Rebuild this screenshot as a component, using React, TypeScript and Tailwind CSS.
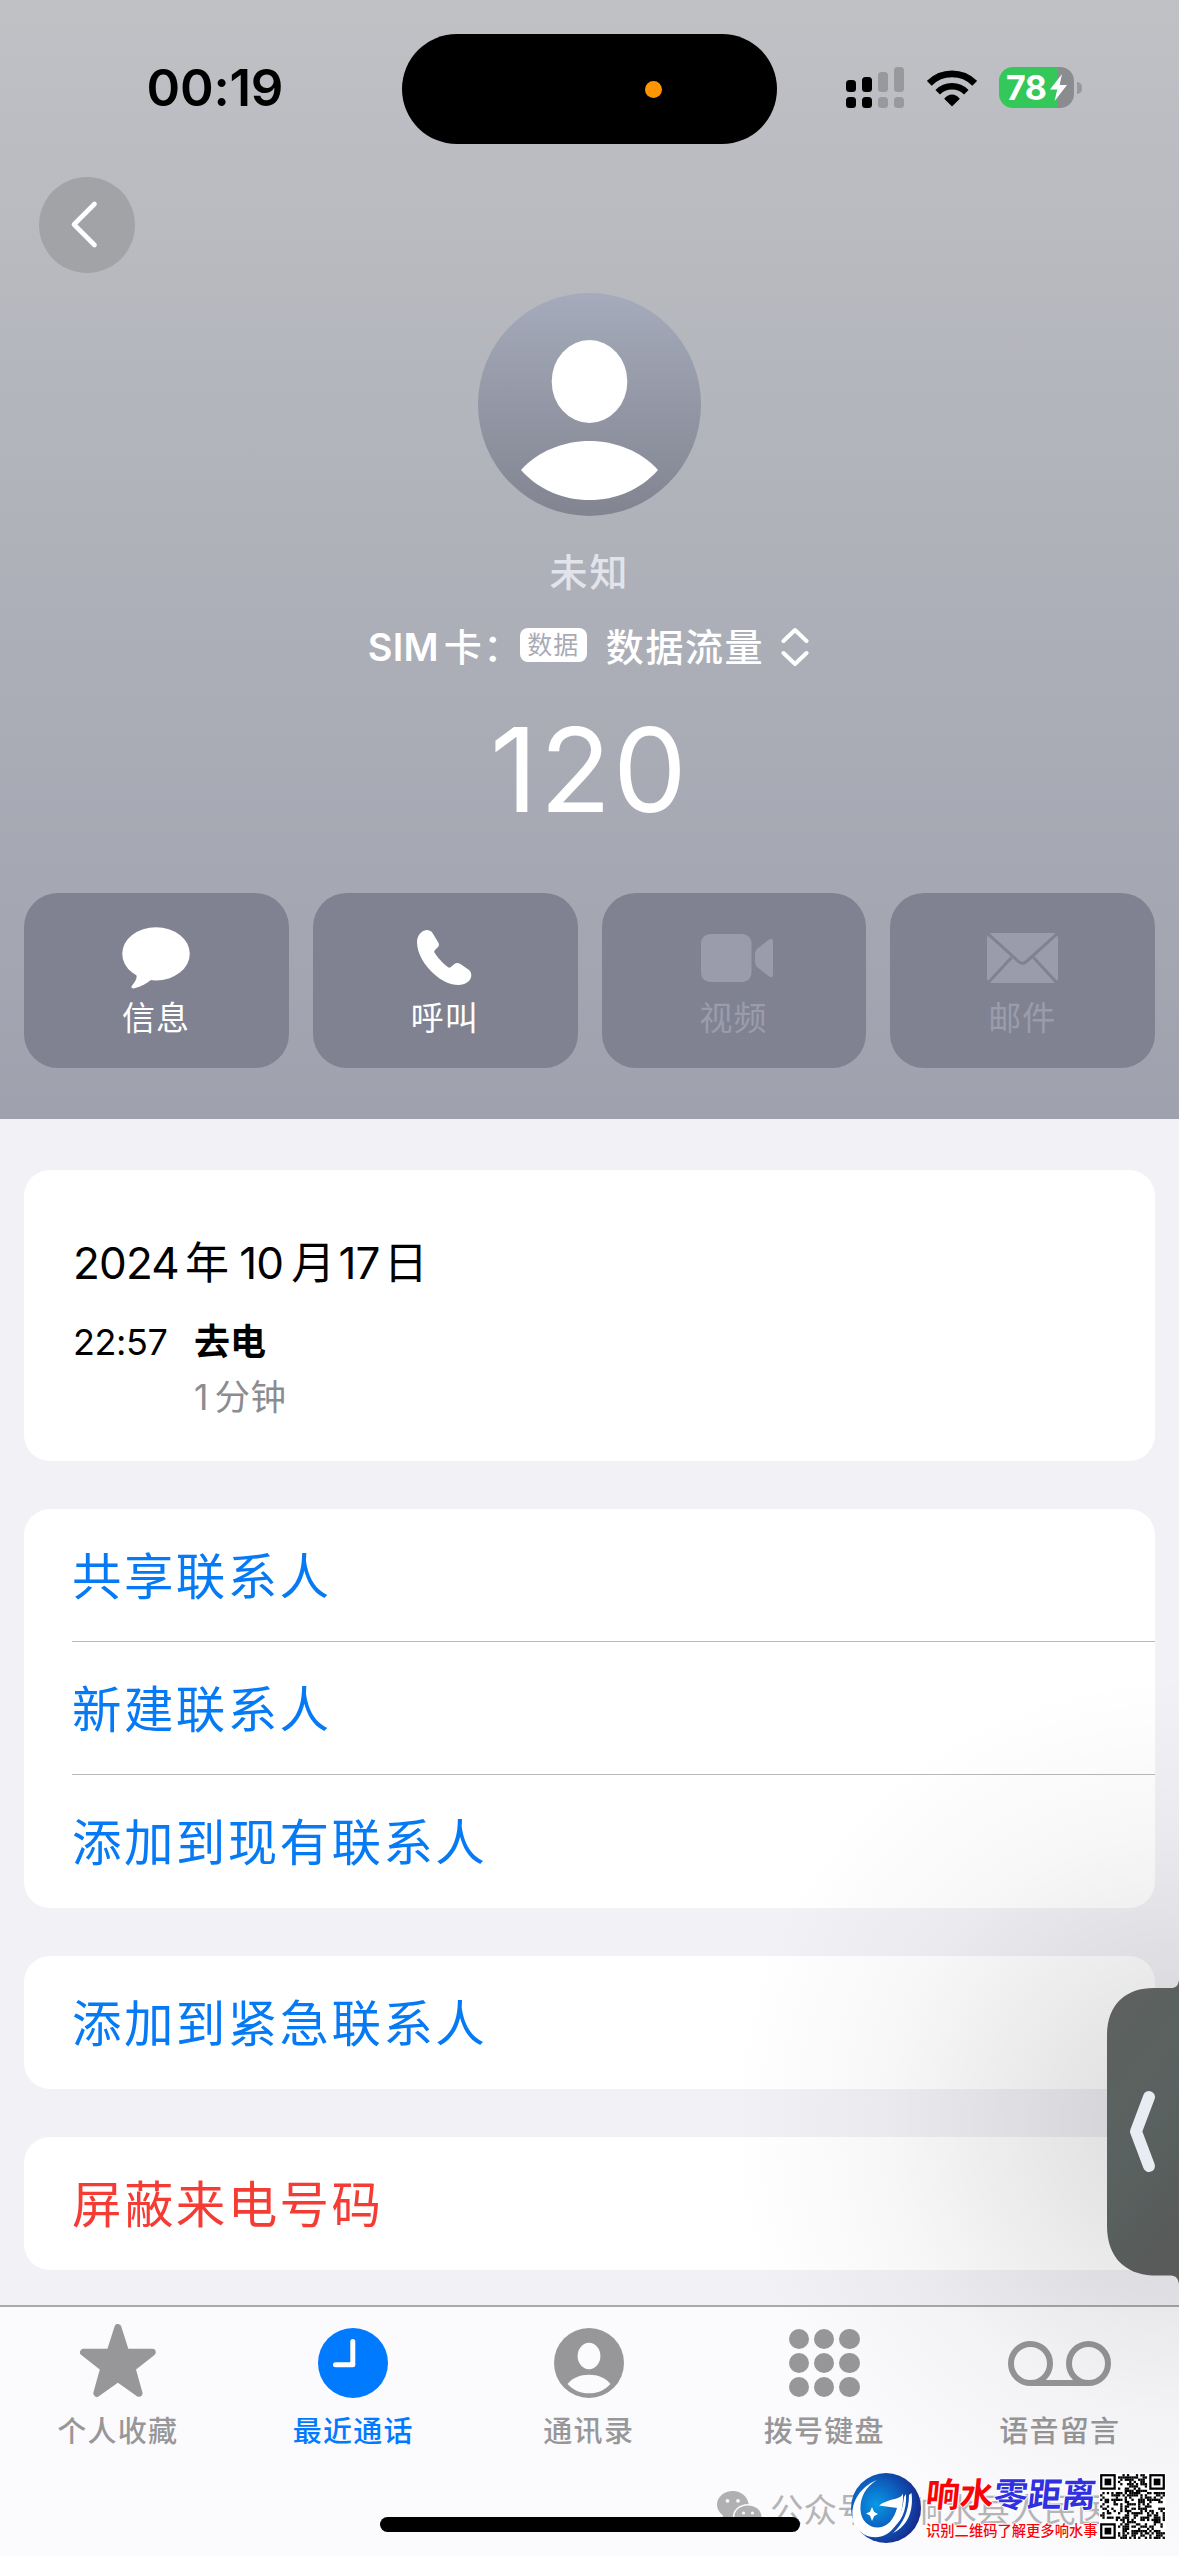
import type { ReactNode } from "react";

const QR_SIZE = 29;

function qrModules() {
  const cells: { x: number; y: number }[] = [];
  let seed = 20241;
  for (let y = 0; y < QR_SIZE; y++) {
    for (let x = 0; x < QR_SIZE; x++) {
      seed = (seed * 1103515245 + 12345) % 2147483648;
      const inFinder =
        (x < 8 && y < 8) || (x > QR_SIZE - 9 && y < 8) || (x < 8 && y > QR_SIZE - 9);
      if (!inFinder && (seed >> 12) % 100 < 52) cells.push({ x, y });
    }
  }
  return cells;
}

function QrCode() {
  const finders = [
    [0, 0],
    [QR_SIZE - 7, 0],
    [0, QR_SIZE - 7],
  ];
  return (
    <svg viewBox="-0.5 -0.5 30 30" className="h-[67px] w-[67px] bg-white">
      {qrModules().map((c) => (
        <rect key={`${c.x}-${c.y}`} x={c.x} y={c.y} width="1.03" height="1.03" />
      ))}
      {finders.map(([x, y]) => (
        <g key={`${x}-${y}`}>
          <rect x={x + 0.5} y={y + 0.5} width="6" height="6" fill="none" stroke="#000" />
          <rect x={x + 2} y={y + 2} width="3" height="3" />
        </g>
      ))}
    </svg>
  );
}

function StatusBar() {
  return (
    <div className="flex h-[177px] shrink-0 items-start">
      <div className="mt-[58px] w-[402px] pl-[146.5px] text-[51px] leading-[60px] font-semibold tracking-[-0.2px] text-black">
        00:19
      </div>
      <div className="mt-[34px] flex h-[110px] w-[375px] items-center justify-end rounded-full bg-black pr-[115px]">
        <div className="h-[17px] w-[17px] rounded-full bg-[#ff9500]" />
      </div>
      <div className="mt-[67px] ml-[69px] flex items-start">
        <svg width="58" height="41" viewBox="0 0 58 41">
          <g fill="#000">
            <rect x="0" y="13" width="10" height="12" rx="3.5" />
            <rect x="16" y="10" width="10" height="15" rx="3.5" />
            <rect x="0" y="30" width="10" height="11" rx="3.5" />
            <rect x="16" y="30" width="10" height="11" rx="3.5" />
          </g>
          <g fill="#98999d">
            <rect x="32" y="5" width="10" height="20" rx="3.5" />
            <rect x="48" y="0" width="10" height="25" rx="3.5" />
            <rect x="32" y="30" width="10" height="11" rx="3.5" />
            <rect x="48" y="30" width="10" height="11" rx="3.5" />
          </g>
        </svg>
        <svg className="mt-[2px] ml-[23px]" width="50" height="38" viewBox="0 0 50 38">
          <path d="M2.3 14.3A32.1 32.1 0 0 1 47.7 14.3" fill="none" stroke="#000" strokeWidth="6.8" />
          <path d="M10.7 23.2A20.2 20.2 0 0 1 39.3 23.2" fill="none" stroke="#000" strokeWidth="6.4" />
          <path d="M25 37.5L17.2 29.7Q25 21.5 32.8 29.7Z" fill="#000" />
        </svg>
        <div className="ml-[22px] flex h-[41px] w-[75px] items-center overflow-hidden rounded-[14px] bg-linear-to-r from-[#34c759] from-[79%] to-[#8b8c8f] to-[79%] pl-[7px]">
          <span className="w-[44px] text-[34px] leading-[41px] font-bold tracking-[-0.5px] text-white">78</span>
          <svg width="17" height="27" viewBox="0 0 17 27" className="shrink-0">
            <path d="M12 0L0 15.5H7.2L4.6 27L17 11H9.6Z" fill="#fff" />
          </svg>
        </div>
        <div className="mt-[15px] ml-[3px] h-[12px] w-[5px] rounded-r-full bg-[#98999d]" />
      </div>
    </div>
  );
}

function Avatar() {
  return (
    <svg width="223" height="223" viewBox="0 0 223 223">
      <defs>
        <linearGradient id="avatar" x1="0" y1="0" x2="0" y2="1">
          <stop offset="0" stopColor="#a5abbb" />
          <stop offset="1" stopColor="#828490" />
        </linearGradient>
      </defs>
      <circle cx="111.5" cy="111.5" r="111.5" fill="url(#avatar)" />
      <ellipse cx="111.5" cy="88.5" rx="37.8" ry="41.5" fill="#fff" />
      <path
        d="M43 177C60 158 86 148 111.5 148S163 158 180 177C162 197 138 207 111.5 207S61 197 43 177Z"
        fill="#fff"
      />
    </svg>
  );
}

function Action({ label, dim, children }: { label: string; dim?: boolean; children: ReactNode }) {
  return (
    <div
      className={`flex h-[175px] flex-1 flex-col items-center rounded-[34px] bg-[#808291] pr-px ${
        dim ? "text-[#9a9cab]" : "text-white"
      }`}
    >
      <div className="mt-[33px] flex h-[63px] items-center justify-center">{children}</div>
      <div className="mt-[5px] h-[48px] text-[33px] leading-[48px] tracking-[1px]">{label}</div>
    </div>
  );
}

function Row({ label, line, red }: { label: string; line?: boolean; red?: boolean }) {
  return (
    <div
      className={`ml-[48px] flex h-[133px] items-center pt-[4px] text-[49.5px] tracking-[2.4px] ${
        red ? "text-[#f43b34]" : "text-[#067af4]"
      } ${line ? "border-b border-[#b9b9bc]" : ""}`}
    >
      {label}
    </div>
  );
}

function Tab({ label, active, children }: { label: string; active?: boolean; children: ReactNode }) {
  return (
    <div
      className={`flex w-[235.5px] shrink-0 flex-col items-center ${active ? "text-[#007aff]" : "text-[#97979a]"}`}
    >
      <div className="flex h-[112px] items-center justify-center">{children}</div>
      <div className="-mt-[2px] text-[29px] leading-[30px] font-medium tracking-[1.3px] whitespace-nowrap">{label}</div>
    </div>
  );
}

function WeChat() {
  return (
    <svg width="45" height="38" viewBox="0 0 45 38" fill="#b0b0b2">
      <path d="M16 0C7 0 0 6 0 13.6C0 18 2.4 21.8 6 24.4L4.5 29.5L10.5 26.5C12.2 27 14 27.2 16 27.2C15 20 21 13 31.6 13C30.5 5.5 24 0 16 0Z" />
      <path d="M31 14.5C23 14.5 17.4 19.6 17.4 25.8C17.4 32 23 37 31 37C32.7 37 34.2 36.8 35.7 36.3L40.5 38L39.3 34.3C42.5 32.3 44.5 29.2 44.5 25.8C44.5 19.6 39 14.5 31 14.5Z" />
      <g fill="#f6f6f8">
        <circle cx="10.5" cy="9.8" r="1.9" />
        <circle cx="21" cy="9.8" r="1.9" />
        <circle cx="26.5" cy="22" r="1.6" />
        <circle cx="35.5" cy="22" r="1.6" />
      </g>
    </svg>
  );
}

function BrandLogo() {
  return (
    <svg width="70" height="70" viewBox="0 0 70 70">
      <defs>
        <radialGradient id="globe" cx="0.36" cy="0.45" r="0.65">
          <stop offset="0" stopColor="#089ae6" />
          <stop offset="0.5" stopColor="#0c62c0" />
          <stop offset="1" stopColor="#17288c" />
        </radialGradient>
      </defs>
      <circle cx="35" cy="35" r="35" fill="url(#globe)" />
      <path
        d="M26 7C14 14 9 25 9.500 37C10 47 17 54.500 27 54.500C37 54 43 46 46 35L28 32.500C38 25 50 27 52 20.500L52 26C51 46 43 60 30 63.500C20 66 9 62 3 51C-3 33 8 14 26 7Z"
        fill="#fff"
      />
      <path d="M55 21C56 38 50 50 39 57C47 49 52 37 53 24Z" fill="#fff" />
      <path d="M60.500 20C63 40 55 54 42 60C52 51 58 38 58 22Z" fill="#fff" />
      <path d="M21 34L23.2 39L27 41L23.2 43L21 48L19 42.600L15 40.500L19 38.700Z" fill="#fff" />
    </svg>
  );
}

export default function App() {
  return (
    <div className="relative flex h-[2556px] w-[1179px] flex-col overflow-hidden bg-[#f1f1f6] font-['Inter','Noto_Sans_CJK_SC',sans-serif]">
      <header className="flex h-[1119px] shrink-0 flex-col bg-linear-to-b from-[#c0c1c5] via-[#adb0b8] via-[53%] to-[#9fa1ae]">
        <StatusBar />
        <div className="ml-[39px] flex h-[96px] w-[96px] shrink-0 items-center justify-center rounded-full bg-[#a2a3a7]">
          <svg width="28" height="50" viewBox="0 0 28 50" className="-mt-px -ml-[7px]">
            <path d="M24.5 4L4 24.5L24.5 45" fill="none" stroke="#fff" strokeWidth="4.6" strokeLinecap="round" strokeLinejoin="round" />
          </svg>
        </div>
        <div className="mt-[20px] flex flex-col items-center">
          <Avatar />
          <div className="mt-[28px] h-[56px] text-[38px] leading-[56px] font-medium tracking-[2px] text-[#e2e4ec]">未知</div>
          <div className="mt-[17px] -ml-[2px] flex h-[60px] items-center text-[38px] leading-[60px] font-medium tracking-[1.6px] text-white">
            <span className="w-[152px] font-semibold whitespace-nowrap">
              <span className="tracking-[0.2px]">SIM</span>
              <span className="ml-[5px] font-medium">卡：</span>
            </span>
            <span className="-mt-[4px] flex h-[34px] w-[67px] items-center justify-center rounded-[8px] bg-white text-[25px] leading-[34px] font-normal tracking-[1px] text-[#a9abb4]">
              数据
            </span>
            <span className="ml-[19px]">数据流量</span>
            <svg width="28" height="40" viewBox="0 0 28 40" className="ml-[17px]">
              <path d="M2.5 14L14 3L25.5 14M2.5 26L14 37L25.5 26" fill="none" stroke="#fff" strokeWidth="4" strokeLinecap="round" strokeLinejoin="round" />
            </svg>
          </div>
          <div className="mt-[23px] h-[140px] text-[117px] leading-[140px] tracking-[2px] text-white">120</div>
        </div>
        <div className="mt-[53px] flex gap-[24px] px-[24px]">
          <Action label="信息">
            <svg width="68" height="62" viewBox="0 0 68 62" fill="currentColor">
              <ellipse cx="34" cy="26.8" rx="33.8" ry="26.6" />
              <path d="M14 46C16 51 13 55 10 58.5C8.5 60.5 10 61.8 12.5 61.3C19 59.8 25 56 29.5 52.5Z" />
            </svg>
          </Action>
          <Action label="呼叫">
            <svg width="55" height="56" viewBox="0 0 55 56" fill="currentColor">
              <path d="M9.6 0C4 .5 0 6 0 12C0 24 8 36 17 44C24 50.5 33 55 41.5 55C48 55 54.3 51 54.3 45.5C54.3 43 53.5 41 51.7 39.7L43 33.8C41 32.5 39 32.6 37.2 34.2L33.8 37C32.8 37.9 31.8 37.9 30.8 37C26 33.5 20.5 27.5 17.6 22.8C17 21.6 17.2 20.8 18 19.9L21 17C22.3 15.6 22.2 14 21.3 12.4L15.5 3C14 .8 12 0 9.6 0Z" />
            </svg>
          </Action>
          <Action label="视频" dim>
            <svg width="72" height="48" viewBox="0 0 72 48" fill="currentColor" className="ml-[7px]">
              <rect width="50.5" height="48" rx="9" />
              <path d="M54 20Q54 17 56 15L67.5 6Q72 3 72 7.5V40.5Q72 45 67.5 42L56 33Q54 31 54 28Z" />
            </svg>
          </Action>
          <Action label="邮件" dim>
            <svg width="71" height="50" viewBox="0 0 71 50">
              <rect width="71" height="50" rx="5" fill="currentColor" />
              <path d="M0 0L31.5 28.5Q35.5 32 39.5 28.5L71 0M24.5 24.5L0 51M46.5 24.5L71 51" fill="none" stroke="#808291" strokeWidth="3" />
            </svg>
          </Action>
        </div>
      </header>

      <main className="flex flex-1 flex-col px-[24px] pt-[51px]">
        <section className="h-[291px] rounded-[26px] bg-white pl-[49px] text-black">
          <div className="pt-[63px] text-[44px] leading-[60px] tracking-[-0.8px] whitespace-nowrap">
            2024<span className="mr-[11px] ml-[6px]">年</span>10<span className="ml-[8px]">月</span>
            <span className="ml-[4px]">17</span><span className="ml-[4px]">日</span>
          </div>
          <div className="mt-[23px] flex text-[36px] leading-[52px]">
            <div className="w-[121px] tracking-[-0.4px]">22:57</div>
            <div>
              <div className="text-[36px] font-bold">去电</div>
              <div className="mt-[4px] text-[35.5px] leading-[52px] text-[#8c8c8f]">
                1<span className="ml-[6px] tracking-[0.5px]">分钟</span>
              </div>
            </div>
          </div>
        </section>
        <section className="mt-[48px] h-[399px] overflow-hidden rounded-[26px] bg-white">
          <Row label="共享联系人" line />
          <Row label="新建联系人" line />
          <Row label="添加到现有联系人" />
        </section>
        <section className="mt-[48px] h-[133px] rounded-[26px] bg-white">
          <Row label="添加到紧急联系人" />
        </section>
        <section className="mt-[48px] h-[133px] rounded-[26px] bg-white">
          <Row label="屏蔽来电号码" red />
        </section>
      </main>

      <nav className="flex h-[251px] shrink-0 border-t-2 border-[#aaaaae] bg-[#fbfbfd]">
        <Tab label="个人收藏">
          <svg width="76" height="73" viewBox="0 0 76 73" className="-mt-[5px]">
            <path
              d="M37.9 3.5L45.8 28.3H72.3L52 44.2L59 69.3L37.9 54.3L16.8 69.3L23.8 44.2L3.5 28.3H30Z"
              fill="currentColor"
              stroke="currentColor"
              strokeWidth="7"
              strokeLinejoin="round"
            />
          </svg>
        </Tab>
        <Tab label="最近通话" active>
          <svg width="70" height="70" viewBox="0 0 70 70">
            <circle cx="35" cy="35" r="35" fill="currentColor" />
            <path d="M34.8 13.5V36.8H17.5" fill="none" stroke="#fff" strokeWidth="5" strokeLinecap="round" strokeLinejoin="round" />
          </svg>
        </Tab>
        <Tab label="通讯录">
          <svg width="70" height="70" viewBox="0 0 70 70">
            <circle cx="35" cy="35" r="35" fill="currentColor" />
            <ellipse cx="35" cy="28" rx="11.4" ry="13.2" fill="#fbfbfd" />
            <path d="M13.5 56C18 50 26 46.7 35 46.7S52 50 56.5 56C51 62 44 65.3 35 65.3S19 62 13.5 56Z" fill="#fbfbfd" />
          </svg>
        </Tab>
        <Tab label="拨号键盘">
          <div className="grid grid-cols-3 gap-x-[5px] gap-y-[4px]">
            {Array.from({ length: 9 }, (_, i) => (
              <span key={i} className="h-[20.2px] w-[20.2px] rounded-full bg-current" />
            ))}
          </div>
        </Tab>
        <Tab label="语音留言">
          <svg width="103" height="45" viewBox="0 0 103 45" fill="none" stroke="currentColor" strokeWidth="6">
            <circle cx="22.5" cy="22.5" r="19.5" />
            <circle cx="80.5" cy="22.5" r="19.5" />
            <path d="M22.5 42H80.5" />
          </svg>
        </Tab>
      </nav>

      <div className="absolute right-0 bottom-0 h-[900px] w-[460px] bg-[radial-gradient(ellipse_450px_450px_at_100%_52%,rgba(0,0,0,0.14),rgba(0,0,0,0.09)_30%,rgba(0,0,0,0.03)_65%,transparent)]" />

      <svg className="absolute top-[1980px] right-0" width="73" height="304" viewBox="0 0 73 304">
        <defs>
          <linearGradient id="drawer" x1="0" y1="0" x2="0.3" y2="1">
            <stop offset="0" stopColor="#5e605f" />
            <stop offset="0.6" stopColor="#596260" />
            <stop offset="1" stopColor="#585b5a" />
          </linearGradient>
        </defs>
        <path
          d="M73 0C72 6 70 8 65 8H48C20 8 1 24 1 56V246C1 278 20 294 46 295.5H65C70 296 72 298 73 304Z"
          fill="url(#drawer)"
        />
        <path d="M43 117L30 151.5L43 186" fill="none" stroke="#e8ecf3" strokeWidth="12" strokeLinecap="round" strokeLinejoin="round" />
      </svg>

      <div className="absolute top-[2491px] left-[717px] flex text-[#b4b4b6]">
        <WeChat />
        <div className="ml-[8px] text-[33.5px] leading-[38px] whitespace-nowrap">
          公众号<span className="inline-block w-[39px] text-center">·</span>响水县人民医
        </div>
      </div>

      <div className="absolute top-[2517px] left-[380px] h-[15px] w-[420px] rounded-full bg-black" />

      <div className="absolute top-[2473px] left-[851px] flex items-start">
        <BrandLogo />
        <div className="ml-[5px] w-[173px] whitespace-nowrap [text-shadow:1px_0_0_#fff,-1px_0_0_#fff,0_1px_0_#fff,0_-1px_0_#fff,0_0_3px_#fff]">
          <div className="-skew-x-6 text-[34px] leading-[44px] font-bold text-[#3030e0]">
            <span className="text-[#fb0207]">响水</span>零距离
          </div>
          <div className="mt-[4px] text-[14.3px] leading-[20px] font-medium text-[#fb0207]">识别二维码了解更多响水事</div>
        </div>
        <QrCode />
      </div>
    </div>
  );
}
